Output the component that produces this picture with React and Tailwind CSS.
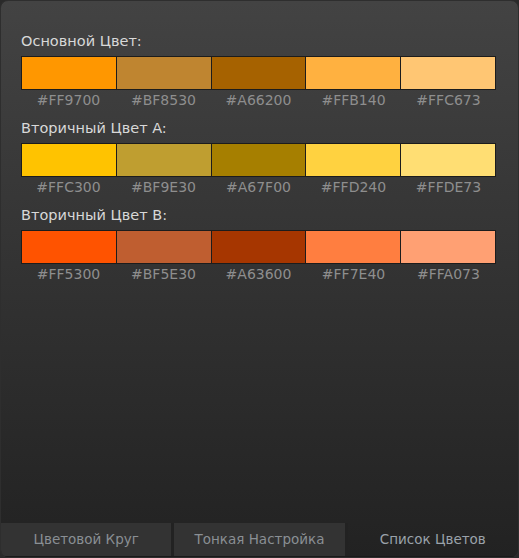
import React from 'react';

const groups = [
  { title: 'Основной Цвет:', colors: ['#FF9700', '#BF8530', '#A66200', '#FFB140', '#FFC673'] },
  { title: 'Вторичный Цвет A:', colors: ['#FFC300', '#BF9E30', '#A67F00', '#FFD240', '#FFDE73'] },
  { title: 'Вторичный Цвет B:', colors: ['#FF5300', '#BF5E30', '#A63600', '#FF7E40', '#FFA073'] },
];

const tabs = ['Цветовой Круг', 'Тонкая Настройка', 'Список Цветов'];

export default function App() {
  return (
    <div className="w-[519px] h-[558px] bg-[#2a2a2a] font-['DejaVu_Sans',sans-serif]">
      <div className="h-full flex flex-col rounded-[8px] border border-[#2e2e2e] bg-gradient-to-b from-[#434343] to-[#222222] overflow-hidden">
        <div className="flex-1 pt-[30px] px-[20px]">
          {groups.map((g) => (
            <div key={g.title} className="mb-[8px]">
              <div className="text-[14.5px] leading-[20px] text-[#d8d8d8] mb-[5px]">{g.title}</div>
              <div className="flex w-[475px] border border-[#1c1c1c] bg-[#1c1c1c] gap-px">
                {g.colors.map((c) => (
                  <div key={c} className="flex-1 h-[32px]" style={{ backgroundColor: c }} />
                ))}
              </div>
              <div className="flex w-[475px]">
                {g.colors.map((c) => (
                  <div key={c} className="flex-1 text-center text-[14px] leading-[20px] text-[#8e8e8e]">{c}</div>
                ))}
              </div>
            </div>
          ))}
        </div>
        <div className="flex h-[34px] border-b border-[#1a1a1a]">
          {tabs.map((t, i) => (
            <div
              key={t}
              className={
                i < 2
                  ? 'flex-1 flex items-center justify-center bg-[#333333] border-r-[3px] border-[#222222] text-[13.5px] text-[#8a8f94]'
                  : 'flex-1 flex items-center justify-center text-[13.5px] text-[#9aa2aa]'
              }
            >
              {t}
            </div>
          ))}
        </div>
      </div>
    </div>
  );
}
